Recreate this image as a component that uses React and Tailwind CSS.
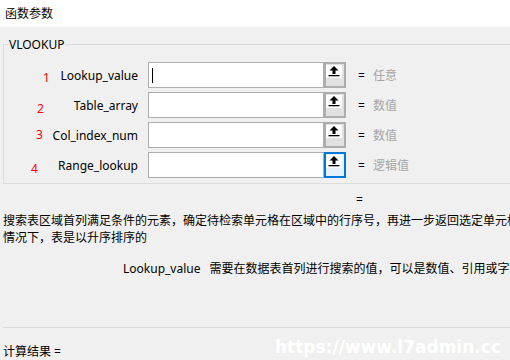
import React from 'react';

const rows = [
  { label: 'Lookup_value', num: '1', numPos: 'left-[39px] top-[8px]', hint: '任意', caret: true },
  { label: 'Table_array', num: '2', numPos: 'left-[33px] top-[9px]', hint: '数值' },
  { label: 'Col_index_num', num: '3', numPos: 'left-[32px] top-[5px]', hint: '数值' },
  { label: 'Range_lookup', num: '4', numPos: 'left-[27px] top-[9px]', hint: '逻辑值', focused: true },
];

function PickIcon() {
  return (
    <svg width="16" height="13" viewBox="0 0 16 13" className="block">
      <rect width="16" height="13" fill="#fff" />
      <polygon points="8,1 3.5,5.5 12.5,5.5" fill="#000" />
      <rect x="6.5" y="5" width="3" height="4" fill="#000" />
      <rect x="2.5" y="10" width="11" height="1.3" fill="#000" />
    </svg>
  );
}

function ArgRow({ row }) {
  return (
    <div className="flex items-center h-[26px]">
      {/* label column with red annotation number */}
      <div className="relative w-[134px] h-full flex items-center justify-end">
        <span className={`absolute ${row.numPos} text-[12px] leading-[16px] text-[#ff0000]`}>{row.num}</span>
        <span>{row.label}</span>
      </div>
      <div className="ml-[10px] w-[176px] h-[26px] border border-[#adadad] bg-white flex items-center">
        {row.caret && <div className="ml-[3px] w-px h-[15px] bg-black" />}
      </div>
      <div
        className={
          row.focused
            ? 'w-[22px] h-[26px] border-2 border-[#0078d7] bg-[#e5f1fb] pt-[1px]'
            : 'w-[22px] h-[26px] border-2 border-[#adadad] bg-[#e1e1e1] pt-[1px]'
        }
      >
        <PickIcon />
      </div>
      <span className="ml-[12px]">=</span>
      <span className="ml-[8px] text-[#a6a6a6]">{row.hint}</span>
    </div>
  );
}

export default function App() {
  return (
    <div className="relative w-[510px] h-[360px] overflow-hidden bg-[#f0f0f0] text-black text-[12px] leading-[17px] font-['Noto_Sans','Noto_Sans_CJK_SC',sans-serif] flex flex-col">
      <div className="h-[27px] shrink-0 bg-white flex items-center pl-[5px]">函数参数</div>

      {/* VLOOKUP group box */}
      <div className="relative shrink-0 mt-[17px] ml-[3px] mr-[-20px] border border-[#dcdcdc] pt-[17px] pb-[5px] flex flex-col gap-[4px]">
        <span className="absolute -top-[9px] left-[5px] bg-[#f0f0f0] pr-[1px]">VLOOKUP</span>
        {rows.map((row) => (
          <ArgRow key={row.label} row={row} />
        ))}
      </div>

      <div className="mt-[7px] pl-[356px] whitespace-nowrap">=</div>

      <div className="mt-[4px] pl-[3px] whitespace-nowrap">
        <div>搜索表区域首列满足条件的元素，确定待检索单元格在区域中的行序号，再进一步返回选定单元格的值。默认</div>
        <div>情况下，表是以升序排序的</div>
      </div>

      <div className="mt-[14px] pl-[123px] whitespace-nowrap">
        <span>Lookup_value</span>
        <span className="ml-[9px]">需要在数据表首列进行搜索的值，可以是数值、引用或字符串</span>
      </div>

      <div className="mt-[50px] ml-[3px] border-t border-[#d9d9d9]" />

      <div className="mt-[15px] pl-[3px] whitespace-nowrap">计算结果 =</div>

      {/* watermark */}
      <div className="absolute top-[339px] left-[275px] text-[17px] leading-none font-bold text-white font-['DejaVu_Sans',sans-serif] whitespace-nowrap">
        https://www.l7admin.cc
      </div>
    </div>
  );
}
